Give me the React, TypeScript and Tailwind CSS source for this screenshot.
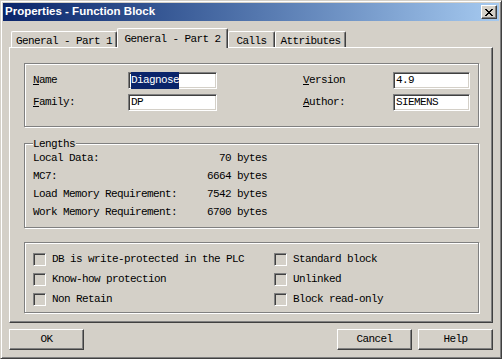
const MONO = "font-['Liberation_Mono',monospace] text-[11px] tracking-[-0.6px] text-black";

const raised =
  'border border-t-white border-l-white border-r-[#404040] border-b-[#404040] shadow-[inset_-1px_-1px_0_#808080]';
const sunken =
  'border border-t-[#808080] border-l-[#808080] border-r-white border-b-white shadow-[inset_1px_1px_0_#404040,inset_-1px_-1px_0_#d4d0c8]';
const etched = 'relative border border-[#808080] shadow-[inset_1px_1px_0_#fff,1px_1px_0_#fff]';

function Field({ value, width, selected }: { value: string; width: string; selected?: boolean }) {
  return (
    <div className={`${sunken} ${width} flex h-[17px] items-center bg-white pl-[2px]`}>
      <span className={selected ? 'bg-[#0a246a] text-white' : ''}>{value}</span>
    </div>
  );
}

function Check({ label }: { label: string }) {
  return (
    <div className="flex h-[20px] items-center gap-[6px]">
      <span className={`${sunken} block h-[13px] w-[13px] bg-[#d4d0c8]`} />
      <span>{label}</span>
    </div>
  );
}

function Tab({ label, active, width }: { label: string; active?: boolean; width: string }) {
  return (
    <div
      className={`${width} flex items-start justify-center rounded-t-[2px] border-t border-l border-r border-t-white border-l-white border-r-[#404040] bg-[#d4d0c8] shadow-[inset_-1px_0_0_#808080] ${
        active ? 'relative z-10 -mb-[1px] h-[20px] pt-[2px]' : 'h-[16px] pt-[1px]'
      }`}
    >
      {label}
    </div>
  );
}

function Button({ label }: { label: string }) {
  return (
    <div className={`${raised} flex h-[21px] w-[75px] items-center justify-center bg-[#d4d0c8]`}>{label}</div>
  );
}

const lengths = [
  ['Local Data:', '70 bytes'],
  ['MC7:', '6664 bytes'],
  ['Load Memory Requirement:', '7542 bytes'],
  ['Work Memory Requirement:', '6700 bytes'],
];

export default function App() {
  return (
    <div
      className={`h-[359px] w-[502px] overflow-hidden border border-t-[#d4d0c8] border-l-[#d4d0c8] border-r-[#404040] border-b-[#404040] bg-[#d4d0c8] p-[2px] shadow-[inset_1px_1px_0_#fff,inset_-1px_-1px_0_#808080] ${MONO}`}
    >
      {/* Title bar */}
      <div className="flex h-[18px] items-center justify-between bg-linear-to-r from-[#0a246a] to-[#a6caf0] pl-[2px] pr-[2px]">
        <span className="font-['Liberation_Sans',Arial,sans-serif] text-[11.5px] font-bold tracking-normal text-white">
          Properties - Function Block
        </span>
        <div className={`${raised} flex h-[14px] w-[16px] items-center justify-center bg-[#d4d0c8]`}>
          <svg width="8" height="7" viewBox="0 0 8 7" shapeRendering="crispEdges">
            <path
              d="M0 0h2v1h-2zM6 0h2v1h-2zM1 1h2v1h-2zM5 1h2v1h-2zM2 2h4v1h-4zM3 3h2v1h-2zM2 4h4v1h-4zM1 5h2v1h-2zM5 5h2v1h-2zM0 6h2v1h-2zM6 6h2v1h-2z"
              fill="#000"
            />
          </svg>
        </div>
      </div>

      {/* Tabs */}
      <div className="ml-[6px] mt-[7px] w-[484px]">
        <div className="flex h-[19px] items-end pl-[2px]">
          <Tab label="General - Part 1" width="w-[106px]" />
          <Tab label="General - Part 2" width="w-[111px]" active />
          <Tab label="Calls" width="w-[47px]" />
          <Tab label="Attributes" width="w-[71px]" />
        </div>

        <div className={`${raised} h-[276px] pl-[14px] pt-[15px]`}>
          {/* Name / family / version / author */}
          <div className={`${etched} h-[64px] w-[455px] pl-[8px] pt-[8px]`}>
            <div className="flex flex-col gap-[5px]">
              <div className="flex h-[17px] items-center">
                <span className="w-[95px]">
                  <u>N</u>ame
                </span>
                <Field value="Diagnose" width="w-[89px]" selected />
                <span className="ml-[86px] w-[90px]">
                  <u>V</u>ersion
                </span>
                <Field value="4.9" width="w-[77px]" />
              </div>
              <div className="flex h-[17px] items-center">
                <span className="w-[95px]">
                  <u>F</u>amily:
                </span>
                <Field value="DP" width="w-[89px]" />
                <span className="ml-[86px] w-[90px]">
                  <u>A</u>uthor:
                </span>
                <Field value="SIEMENS" width="w-[77px]" />
              </div>
            </div>
          </div>

          {/* Lengths */}
          <div className={`${etched} mt-[16px] h-[85px] w-[455px] pl-[8px] pt-[5px]`}>
            <span className="absolute left-[8px] top-[-7px] bg-[#d4d0c8] pr-[1px] leading-[14px]">Lengths</span>
            {lengths.map(([label, value]) => (
              <div key={label} className="flex h-[18px] w-[234px] items-center justify-between">
                <span>{label}</span>
                <span>{value}</span>
              </div>
            ))}
          </div>

          {/* Options */}
          <div className={`${etched} mt-[14px] flex h-[71px] w-[455px] pl-[8px] pt-[6px]`}>
            <div className="w-[241px]">
              <Check label="DB is write-protected in the PLC" />
              <Check label="Know-how protection" />
              <Check label="Non Retain" />
            </div>
            <div>
              <Check label="Standard block" />
              <Check label="Unlinked" />
              <Check label="Block read-only" />
            </div>
          </div>
        </div>

        {/* Buttons */}
        <div className="mt-[6px] flex justify-between">
          <Button label="OK" />
          <div className="flex gap-[6px]">
            <Button label="Cancel" />
            <Button label="Help" />
          </div>
        </div>
      </div>
    </div>
  );
}
